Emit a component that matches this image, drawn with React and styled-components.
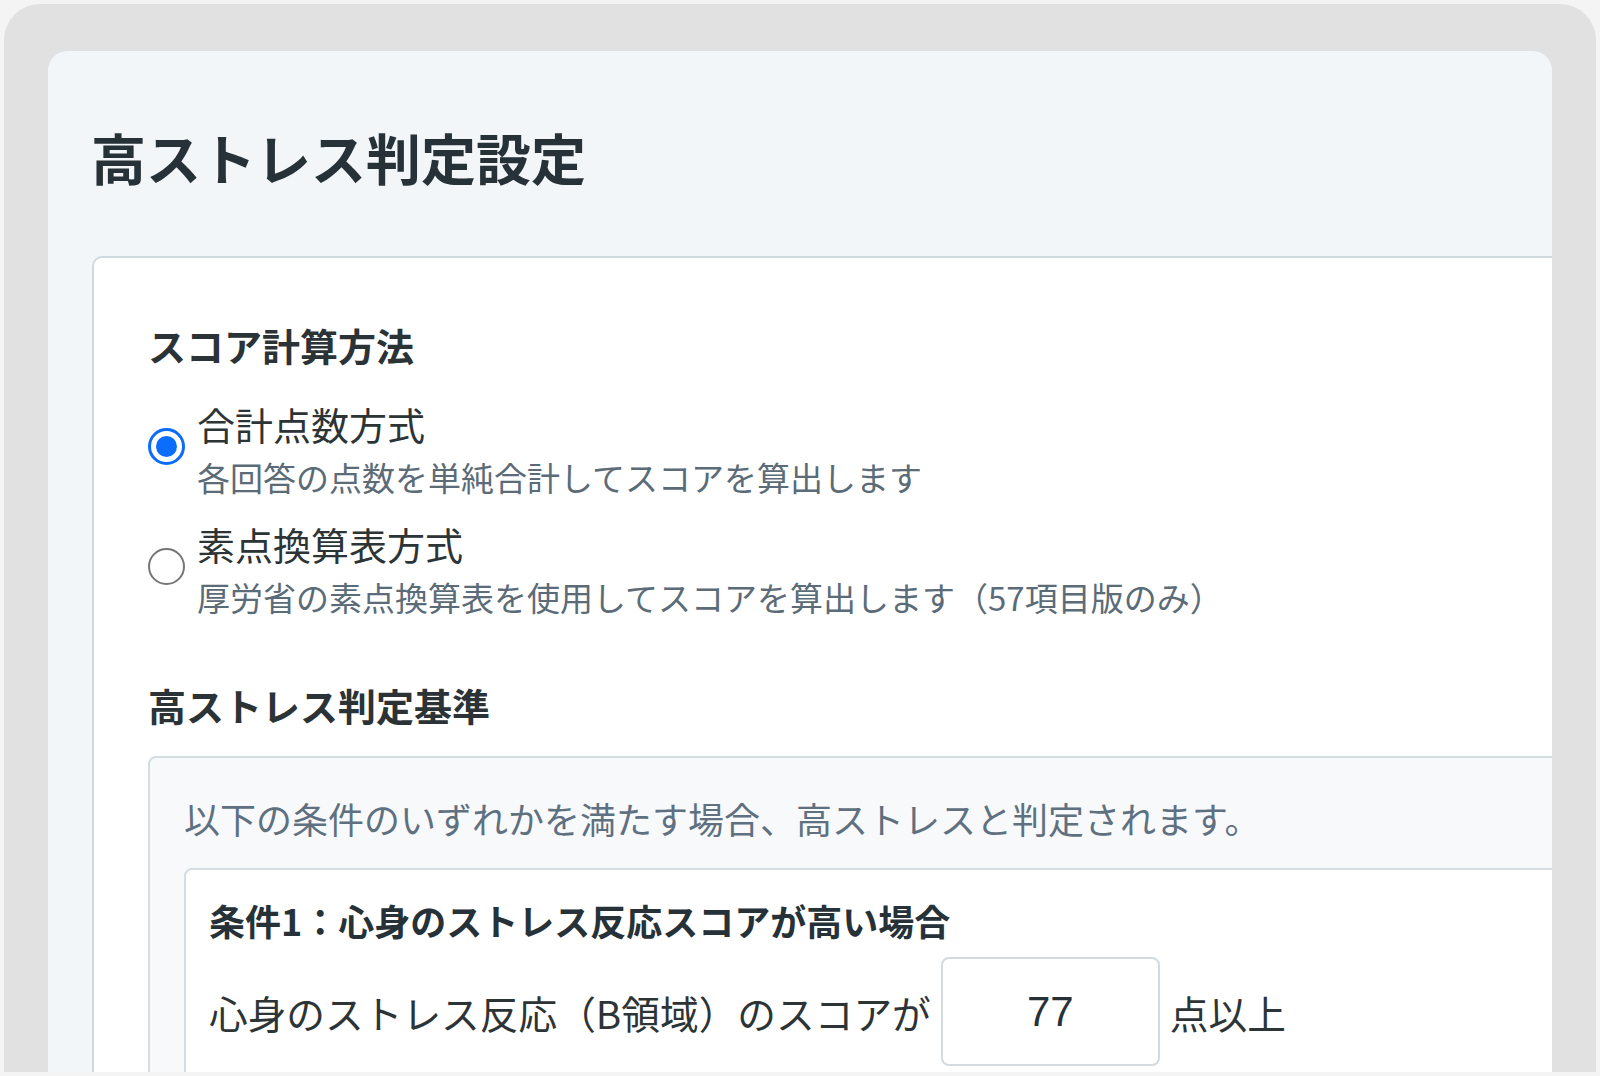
import React from "react";
import styled, { createGlobalStyle } from "styled-components";

const GlobalStyle = createGlobalStyle`
  html, body {
    margin: 0;
    padding: 0;
    background: #f4f4f4;
    overflow: hidden;
  }
  body {
    font-family: "Noto Sans CJK JP", "Noto Sans", sans-serif;
    color: #263238;
  }
  * { box-sizing: border-box; }
`;

const Frame = styled.div`
  margin: 4px 4px 0;
  height: 1068px;
  background: #e1e1e1;
  border-radius: 36px 36px 0 0;
  padding: 47px 44px 0;
`;

const Panel = styled.main`
  height: 1025px;
  background: #f3f6f9;
  border-radius: 20px 20px 0 0;
  overflow: hidden;
  padding: 65px 0 0 43px;
`;

const Title = styled.h1`
  margin: 0 0 60px;
  font-size: 55px;
  line-height: 80px;
  font-weight: 700;
  color: #263238;
`;

const Card = styled.section`
  background: #ffffff;
  border: 2px solid #d0d9de;
  border-radius: 10px;
  margin-left: 1px;
  margin-right: -30px;
  padding: 62px 0 200px 54px;
`;

const SectionHeading = styled.h2`
  margin: ${(p) => (p.$spaced ? "60px" : "0")} 0 0;
  font-size: 38px;
  line-height: 50px;
  font-weight: 700;
  color: #2b3336;
`;

const RadioGroup = styled.div`
  margin-top: 29px;
  display: flex;
  flex-direction: column;
  gap: 19px;
`;

const Option = styled.label`
  display: flex;
  align-items: center;
  gap: 12px;
  cursor: pointer;
`;

const RadioCircle = styled.span`
  flex: none;
  width: 37px;
  height: 37px;
  border-radius: 50%;
  margin-top: -6px;
  border: ${(p) => (p.$checked ? "3px solid #0b6dfb" : "2.5px solid #767676")};
  background: #fff;
  display: flex;
  align-items: center;
  justify-content: center;
  &::after {
    content: "";
    width: 21px;
    height: 21px;
    border-radius: 50%;
    background: ${(p) => (p.$checked ? "#0b6dfb" : "transparent")};
  }
`;

const OptionText = styled.div`
  display: flex;
  flex-direction: column;
  gap: 5px;
`;

const OptionLabel = styled.span`
  font-size: 38px;
  line-height: 50px;
  color: #2d3436;
`;

const OptionDesc = styled.span`
  font-size: 33px;
  line-height: 46px;
  color: #5b6b77;
`;

const CriteriaBox = styled.div`
  margin-top: 26px;
  margin-right: -30px;
  background: #f7f9fa;
  border: 2px solid #d5dde1;
  border-radius: 8px;
  padding: 37px 0 100px 34px;
`;

const Intro = styled.p`
  margin: 0;
  font-size: 36px;
  line-height: 46px;
  color: #5f7080;
`;

const ConditionCard = styled.div`
  margin-top: 27px;
  background: #ffffff;
  border: 2px solid #d5dde1;
  border-radius: 8px;
  padding: 26px 0 60px 23px;
`;

const ConditionTitle = styled.h3`
  margin: 0;
  font-size: 36px;
  line-height: 48px;
  font-weight: 700;
  color: #263238;
`;

const ConditionRow = styled.div`
  margin-top: 13px;
  display: flex;
  align-items: center;
  gap: 10px;
  font-size: 38.7px;
  color: #2d3436;
`;

const ScoreInput = styled.input`
  width: 219px;
  height: 109px;
  border: 2px solid #d3dbe0;
  border-radius: 8px;
  background: #fff;
  text-align: center;
  font-family: "Liberation Sans", Arial, sans-serif;
  font-size: 42px;
  color: #263238;
  outline: none;
  padding: 0;
`;

const options = [
  {
    label: "合計点数方式",
    desc: "各回答の点数を単純合計してスコアを算出します",
    checked: true,
  },
  {
    label: "素点換算表方式",
    desc: "厚労省の素点換算表を使用してスコアを算出します（57項目版のみ）",
    checked: false,
  },
];

export default function App() {
  return (
    <>
      <GlobalStyle />
      <Frame>
        <Panel>
          <Title>高ストレス判定設定</Title>
          <Card>
            <SectionHeading>スコア計算方法</SectionHeading>
            <RadioGroup>
              {options.map((o) => (
                <Option key={o.label}>
                  <RadioCircle $checked={o.checked} />
                  <OptionText>
                    <OptionLabel>{o.label}</OptionLabel>
                    <OptionDesc>{o.desc}</OptionDesc>
                  </OptionText>
                </Option>
              ))}
            </RadioGroup>
            <SectionHeading $spaced>高ストレス判定基準</SectionHeading>
            <CriteriaBox>
              <Intro>以下の条件のいずれかを満たす場合、高ストレスと判定されます。</Intro>
              <ConditionCard>
                <ConditionTitle>条件1：心身のストレス反応スコアが高い場合</ConditionTitle>
                <ConditionRow>
                  <span>心身のストレス反応（B領域）のスコアが</span>
                  <ScoreInput defaultValue="77" />
                  <span>点以上</span>
                </ConditionRow>
              </ConditionCard>
            </CriteriaBox>
          </Card>
        </Panel>
      </Frame>
    </>
  );
}
